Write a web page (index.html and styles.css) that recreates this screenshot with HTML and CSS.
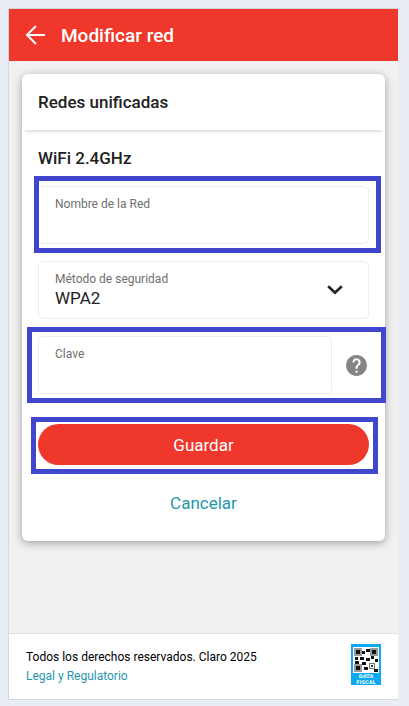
FILE: index.html
```html
<!DOCTYPE html>
<html lang="es">
<head>
<meta charset="utf-8">
<meta name="viewport" content="width=device-width, initial-scale=1">
<title>Modificar red</title>
<link rel="stylesheet" href="styles.css">
</head>
<body>
<div class="screen">
  <header class="topbar">
    <button class="back" type="button" aria-label="Volver">
      <svg width="20" height="20" viewBox="0 0 20 20" fill="none" stroke="currentColor" stroke-width="2"><path d="M20 10H2.500M11 1 2 10l9 9"/></svg>
    </button>
    <h1 class="topbar-title">Modificar red</h1>
  </header>

  <main class="content">
    <form class="card">
      <h2 class="card-head">Redes unificadas</h2>
      <div class="card-body">
        <h3 class="band">WiFi 2.4GHz</h3>

        <div class="row mark mark-name">
          <div class="field">
            <label for="ssid">Nombre de la Red</label>
            <input id="ssid" type="text">
          </div>
        </div>

        <div class="row">
          <div class="field">
            <label for="security">Método de seguridad</label>
            <select id="security"><option>WPA2</option></select>
            <svg class="chevron" width="16" height="10" viewBox="0 0 16 10" fill="none" stroke="currentColor" stroke-width="2.600"><path d="M1.200 1.200 8 7.800l6.800-6.600"/></svg>
          </div>
        </div>

        <div class="row mark mark-key">
          <div class="field">
            <label for="key">Clave</label>
            <input id="key" type="text">
          </div>
          <button class="help" type="button" aria-label="Ayuda">
            <svg width="25" height="25" viewBox="0 0 24 24" fill="currentColor"><path d="M12 2C6.480 2 2 6.480 2 12s4.480 10 10 10 10-4.480 10-10S17.520 2 12 2zm1 17h-2v-2h2v2zm2.070-7.750-.9.920C13.450 12.900 13 13.500 13 15h-2v-.5c0-1.100.450-2.100 1.170-2.830l1.240-1.260c.370-.360.590-.860.590-1.410 0-1.100-.9-2-2-2s-2 .9-2 2H8c0-2.210 1.790-4 4-4s4 1.790 4 4c0 .880-.360 1.680-.930 2.250z"/></svg>
          </button>
        </div>

        <div class="row mark mark-save">
          <button class="save" type="submit">Guardar</button>
        </div>
        <a class="cancel" href="#">Cancelar</a>
      </div>
    </form>
  </main>

  <footer class="footer">
    <div class="legal">
      <p>Todos los derechos reservados. Claro 2025</p>
      <a href="#">Legal y Regulatorio</a>
    </div>
    <a class="fiscal" href="#">
      <svg width="30" height="41" viewBox="0 0 30 41">
        <rect width="30" height="41" fill="#0ba9ef"/>
        <rect x="2" y="3" width="26" height="26" fill="#fff"/>
        <g fill="#9a9a9a"><rect x="3" y="4" width="8" height="8"/><rect x="19" y="4" width="8" height="8"/><rect x="3" y="20" width="8" height="8"/></g>
        <g fill="#111">
          <rect x="5" y="6" width="4" height="4"/><rect x="21" y="6" width="4" height="4"/><rect x="5" y="22" width="4" height="4"/>
          <rect x="15" y="5" width="4" height="3"/><rect x="11" y="7" width="3" height="3"/>
          <rect x="4" y="13" width="3" height="3"/><rect x="9" y="13" width="4" height="3"/><rect x="15" y="14" width="4" height="3"/><rect x="20" y="12" width="3" height="3"/><rect x="24" y="15" width="3" height="3"/>
          <rect x="4" y="17" width="4" height="3"/><rect x="11" y="18" width="4" height="3"/><rect x="13" y="23" width="4" height="3"/><rect x="23" y="25" width="4" height="3"/>
        </g>
        <rect x="18.500" y="19.500" width="5" height="5" fill="#fff" stroke="#777"/><rect x="20" y="21" width="2" height="2" fill="#333"/>
        <g class="fiscal-text" text-anchor="middle"><text x="15" y="34">DATA</text><text x="15" y="40">FISCAL</text></g>
      </svg>
    </a>
  </footer>
</div>
</body>
</html>
```
FILE: styles.css
```css
* {
  box-sizing: border-box;
}

body {
  display: flex;
  min-height: 100vh;
  margin: 0;
  padding: 8px 11px 6px 8px;
  background: #e8edf6;
  color: #212121;
  font-family: Roboto, "Liberation Sans", sans-serif;
  font-size: 17px;
}

h1, h2, h3, p {
  margin: 0;
  font-weight: 500;
}

button, input, select {
  margin: 0;
  padding: 0;
  border: 0;
  background: none;
  color: inherit;
  font: inherit;
}

svg {
  display: block;
}

a {
  color: #1f97ae;
  text-decoration: none;
}

.screen {
  flex: 1;
  display: flex;
  flex-direction: column;
  border: 1px solid #d5d8da;
  border-right: 0;
  background: #f1f1f1;
}

.topbar {
  display: flex;
  align-items: center;
  gap: 16px;
  height: 52px;
  padding: 0 16px;
  background: #f0372b;
  color: #fff;
}

.topbar-title {
  font-size: 19px;
}

.content {
  flex: 1;
  padding: 13px;
}

.card {
  border-radius: 6px;
  background: #fff;
  box-shadow: 0 2px 8px rgba(0, 0, 0, 0.35);
}

.card-head {
  padding: 0 16px;
  border-radius: 6px 6px 0 0;
  box-shadow: 0 4px 4px -3px rgba(0, 0, 0, 0.2);
  font-size: 17px;
  line-height: 56px;
}

.card-body {
  padding: 16px 16px 24px;
}

.band {
  margin-bottom: 16px;
  font-size: 17px;
  line-height: 24px;
}

.row {
  position: relative;
  display: flex;
  align-items: center;
  margin-bottom: 17px;
}

.field {
  position: relative;
  flex: 1;
  height: 58px;
  padding: 8px 16px;
  border: 1px solid #ececec;
  border-radius: 5px;
}

.field label {
  display: block;
  color: #707070;
  font-size: 12px;
  line-height: 18px;
}

.field input,
.field select {
  display: block;
  width: 100%;
  height: 20px;
  appearance: none;
  outline: 0;
}

.chevron {
  position: absolute;
  top: 23px;
  right: 25px;
  pointer-events: none;
}

.help {
  margin-left: 12px;
  color: #858585;
}

/* Highlight frames drawn over the form */
.mark::after {
  content: "";
  position: absolute;
  border: 5px solid #4047cc;
  pointer-events: none;
}

.mark-name::after {
  inset: -10px -12px -9px -4px;
}

.mark-key::after {
  inset: -9px -17px -9px -11px;
}

.mark-save::after {
  inset: -7px -9px -9px -7px;
}

.mark-key {
  margin-bottom: 30px;
}

.save {
  flex: 1;
  height: 41px;
  border-radius: 21px;
  background: #f0372b;
  color: #fff;
}

.cancel {
  display: block;
  margin-top: 24px;
  line-height: 28px;
  text-align: center;
}

.footer {
  display: flex;
  align-items: flex-start;
  justify-content: space-between;
  height: 66px;
  padding: 10px 17px 0;
  border-top: 1px solid #e0e0e0;
  background: #fff;
}

.legal {
  padding-top: 4px;
  color: #000;
  font-size: 12px;
  line-height: 19px;
}

.legal p {
  font-weight: 400;
}

.fiscal-text {
  fill: #e6f7ff;
  font-family: "DejaVu Sans", sans-serif;
  font-size: 5px;
  font-weight: 700;
}
```
